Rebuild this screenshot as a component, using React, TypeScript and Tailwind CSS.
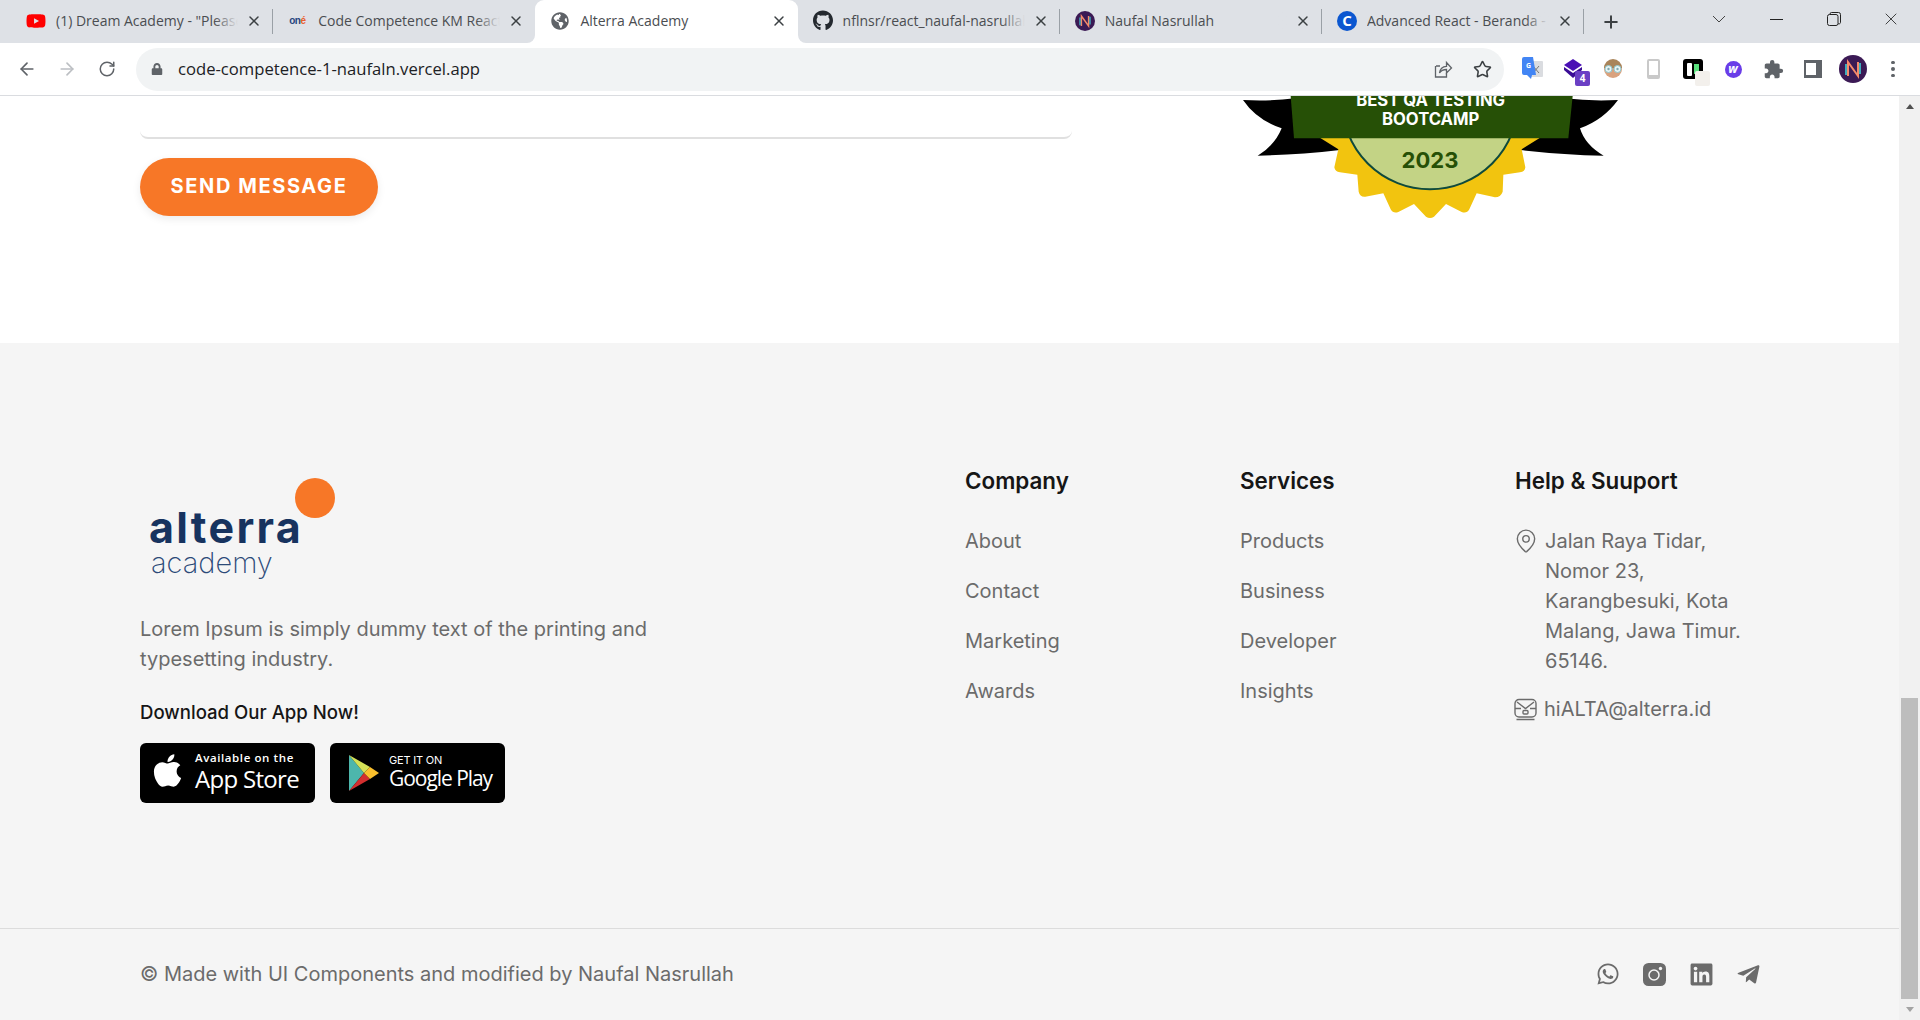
import React from "react";
import { ArrowLeft, ArrowRight, MapPin, Plus, RotateCw, Star, X } from "lucide-react";
import {
  FaApple,
  FaGithub,
  FaGlobeAmericas,
  FaLinkedin,
  FaLock,
  FaTelegramPlane,
  FaWhatsapp,
  FaYoutube,
} from "react-icons/fa";
import { MdExtension } from "react-icons/md";

const NAvatar = ({ size }: { size: number }) => (
  <svg width={size} height={size} viewBox="0 0 28 28">
    <circle cx="14" cy="14" r="14" fill="#3b1a55" />
    <path d="M9 21V7l10 14V7" fill="none" stroke="#f58a6a" strokeWidth="2" />
    <path d="M7 20V9M21 8v11" fill="none" stroke="#3fd0d8" strokeWidth="1.6" />
  </svg>
);

const OneIcon = () => (
  <span className="w-[18px] text-[10px] leading-none font-bold tracking-tighter text-[#27477f] font-['Liberation_Sans',sans-serif]">
    on<span className="text-[#e8602c]">é</span>
  </span>
);

const tabs = [
  { title: '(1) Dream Academy - "Please Stop', icon: <FaYoutube size={22} color="#f00" />, sep: true },
  { title: "Code Competence KM React", icon: <OneIcon />, sep: false },
  { title: "Alterra Academy", icon: <FaGlobeAmericas size={18} color="#5f6368" />, active: true, sep: false },
  { title: "nflnsr/react_naufal-nasrullah", icon: <FaGithub size={21} color="#24292f" />, sep: true },
  { title: "Naufal Nasrullah", icon: <NAvatar size={20} />, sep: true },
  {
    title: "Advanced React - Beranda - Dicoding",
    icon: (
      <span className="w-5 h-5 rounded-full bg-[#0b57d0] text-white grid place-items-center text-[15px] font-bold leading-none">
        C
      </span>
    ),
    sep: true,
  },
];

const Tab = ({ title, icon, active, sep }: { title: string; icon: React.ReactNode; active?: boolean; sep: boolean }) => (
  <div className={`relative w-[262.2px] h-[43px] shrink-0 flex items-center pl-[15px] pr-[11px] pb-[2px] ${active ? "bg-white rounded-t-[9px]" : ""}`}>
    {active && (
      <>
        <span className="absolute bottom-0 -left-2 w-2 h-2 bg-white">
          <span className="block w-2 h-2 bg-[#dee1e6] rounded-br-lg" />
        </span>
        <span className="absolute bottom-0 -right-2 w-2 h-2 bg-white">
          <span className="block w-2 h-2 bg-[#dee1e6] rounded-bl-lg" />
        </span>
      </>
    )}
    <span className="w-[20px] shrink-0 flex justify-center">{icon}</span>
    <div className="relative flex-1 ml-[10px] overflow-hidden whitespace-nowrap text-[14px] text-[#4a4d51]">
      {title}
      <span className={`absolute right-0 top-0 bottom-0 w-6 bg-gradient-to-r from-transparent ${active ? "to-white" : "to-[#dee1e6]"}`} />
    </div>
    <X size={16} strokeWidth={2.2} className="ml-[8px] shrink-0 text-[#3c4043]" />
    {sep && <span className="absolute right-0 top-[9px] h-[25px] w-px bg-[#9aa0a6]" />}
  </div>
);

const TabStrip = () => (
  <div className="h-[43px] shrink-0 bg-[#dee1e6] flex pl-[11px] font-['Open_Sans',sans-serif]">
    {tabs.map((t) => (
      <Tab key={t.title} {...t} />
    ))}
    <div className="w-[54px] grid place-items-center">
      <Plus size={20} strokeWidth={2.4} className="text-[#3c4043]" />
    </div>
    <div className="ml-auto flex text-[#333] pb-[5px]">
      <div className="w-[57.5px] grid place-items-center">
        <svg width="14" height="8" viewBox="0 0 14 8" fill="none" stroke="#444" strokeWidth="1">
          <path d="M1 1l6 6 6-6" />
        </svg>
      </div>
      <div className="w-[57.5px] grid place-items-center">
        <span className="w-[13px] h-px bg-[#222]" />
      </div>
      <div className="w-[57.5px] grid place-items-center">
        <svg width="14" height="14" viewBox="0 0 14 14" fill="none" stroke="#222" strokeWidth="1">
          <rect x="0.5" y="2.5" width="10.5" height="11" rx="2" />
          <path d="M3 2.5V2a1.5 1.5 0 0 1 1.5-1.5h7A2 2 0 0 1 13.5 2.500v8a1.500 1.500 0 0 1-2.500 1" />
        </svg>
      </div>
      <div className="w-[57.5px] grid place-items-center">
        <X size={20} strokeWidth={1} className="text-[#222]" />
      </div>
    </div>
  </div>
);

const ExtCell = ({ children }: { children: React.ReactNode }) => (
  <div className="relative w-10 h-10 shrink-0 grid place-items-center">{children}</div>
);

const Toolbar = () => (
  <div className="h-[53px] shrink-0 bg-white border-b border-[#dadce0] flex items-center pl-[7px] font-['Open_Sans',sans-serif]">
    <ExtCell>
      <ArrowLeft size={20} className="text-[#5f6368]" />
    </ExtCell>
    <ExtCell>
      <ArrowRight size={20} className="text-[#bcbfc3]" />
    </ExtCell>
    <ExtCell>
      <RotateCw size={18} className="text-[#5f6368]" />
    </ExtCell>
    <div className="ml-[9px] w-[1368px] h-[43px] rounded-full bg-[#f1f3f4] flex items-center pl-[15px] pr-[12px]">
      <FaLock size={12} className="text-[#5f6368]" />
      <span className="ml-[15px] text-[16.650px] text-[#202124]">code-competence-1-naufaln.vercel.app</span>
      <div className="ml-auto flex items-center gap-[20px] text-[#5f6368]">
        <svg width="20" height="20" viewBox="0 0 20 20" fill="none" stroke="#5f6368" strokeWidth="1.300">
          <path d="M3 7h4M2.500 7v11h11v-4" />
          <path d="M6.500 14c.5-4 3-6.500 7-6.700V3.500l5 5.500-5 5v-3.500c-3 0-5.500 1-7 3.500z" />
        </svg>
        <Star size={19} strokeWidth={2} className="text-[#3c4043]" />
      </div>
    </div>
    <div className="ml-[9px] flex">
      <ExtCell>
        <svg width="22" height="24" viewBox="0 0 22 24">
          <rect x="8" y="4" width="13" height="16" rx="1" fill="#dadce0" />
          <path d="M11 9l6 7M17 9l-6 7" stroke="#777" strokeWidth="1" />
          <path d="M0 2a2 2 0 0 1 2-2h9l3 18h-4l-1 4-4-4H2a2 2 0 0 1-2-2z" fill="#4285f4" />
          <text x="6.500" y="11" textAnchor="middle" fontSize="7" fontWeight="700" fill="#fff">G</text>
        </svg>
      </ExtCell>
      <ExtCell>
        <svg width="20" height="20" viewBox="0 0 20 20" className="-mt-px -ml-px">
          <path d="M10 0l9 6-9 6-9-6z" fill="#4a0fb5" />
          <path d="M1 8l9 6 9-6v3l-9 8-9-8z" fill="#3a0c96" />
        </svg>
        <span className="absolute right-[3px] bottom-[3px] w-[15px] h-[15px] rounded-[2px] bg-[#6a3fc4] text-white text-[10px] font-bold leading-[15px] text-center">
          4
        </span>
      </ExtCell>
      <ExtCell>
        <svg width="20" height="20" viewBox="0 0 20 20">
          <circle cx="10" cy="10" r="9" fill="#d9a27e" />
          <path d="M1 9a9 9 0 0 1 18 0z" fill="#a9845a" />
          <circle cx="5.500" cy="10" r="3.500" fill="#e8f4f4" stroke="#8fc7cf" />
          <circle cx="14.500" cy="10" r="3.500" fill="#e8f4f4" stroke="#8fc7cf" />
          <circle cx="5.500" cy="10" r="1.200" fill="#7fa9b2" />
          <circle cx="14.500" cy="10" r="1.200" fill="#7fa9b2" />
        </svg>
      </ExtCell>
      <ExtCell>
        <span className="w-[13px] h-[20px] rounded-[2px] border-2 border-[#c9c9c9] border-b-4" />
      </ExtCell>
      <ExtCell>
        <span className="w-5 h-5 rounded-[3px] bg-black flex items-center justify-center gap-[2px] -ml-px">
          <span className="w-[5px] h-[13px] bg-white rounded-[1px]" />
          <span className="w-[5px] h-[10px] bg-[#59e07c]" />
        </span>
        <span className="absolute right-[3px] bottom-[3px] w-[15px] h-[15px] rounded-[2px] bg-[#f3f0ec]" />
      </ExtCell>
      <ExtCell>
        <span className="w-[17px] h-[17px] rounded-full bg-[#6a3de8] text-white text-[12px] italic font-bold leading-[16px] text-center">
          w
        </span>
      </ExtCell>
      <ExtCell>
        <MdExtension size={21} className="text-[#5f6368]" />
      </ExtCell>
      <ExtCell>
        <span className="w-[18px] h-[18px] bg-[#5f6368] pl-[2px] py-[3px] pr-[6px] block">
          <span className="block h-full bg-white" />
        </span>
      </ExtCell>
      <ExtCell>
        <NAvatar size={28} />
      </ExtCell>
      <ExtCell>
        <span className="flex flex-col gap-[3px]">
          <span className="w-[3.500px] h-[3.500px] rounded-full bg-[#5f6368]" />
          <span className="w-[3.500px] h-[3.500px] rounded-full bg-[#5f6368]" />
          <span className="w-[3.500px] h-[3.500px] rounded-full bg-[#5f6368]" />
        </span>
      </ExtCell>
    </div>
  </div>
);

const QaBadge = () => (
  <svg width="420" height="134" viewBox="0 18 1260 402" className="font-['Inter',sans-serif]">
    <path d="M69 30 Q150 34 225 25 L360 180 Q230 195 113 197 Q165 165 185 115 Q110 90 69 30z" fill="#000" />
    <path d="M1194 30 Q1110 34 1035 25 L900 180 Q1030 195 1151 197 Q1095 165 1080 115 Q1150 90 1194 30z" fill="#000" />
    <path
      d="M295 140 L355 178 L343 232 Q345 245 360 247 L412 254 L416 305 Q420 322 436 320 L490 310 L512 358 Q520 372 535 366 L582 342 L618 380 Q630 388 642 380 L678 342 L725 366 Q740 372 748 358 L770 310 L825 322 Q842 322 848 305 L850 254 L900 247 Q915 245 916 232 L905 178 L965 140z"
      fill="#f2c40f"
    />
    <circle cx="630" cy="34" r="264" fill="#c3d385" stroke="#0f4a3c" strokeWidth="6" />
    <path d="M212 18 H1058 L1045 145 H222z" fill="#265006" />
    <text x="632" y="48" textAnchor="middle" fontSize="50" fontWeight="700" fill="#fff">BEST QA TESTING</text>
    <text x="632" y="105" textAnchor="middle" fontSize="50" fontWeight="700" fill="#fff">BOOTCAMP</text>
    <text x="630" y="235" textAnchor="middle" fontSize="66" fontWeight="700" fill="#265006">2023</text>
  </svg>
);

const ContactTail = () => (
  <section className="h-[247px] shrink-0 bg-white flex pl-[140px] overflow-hidden">
    <div className="w-[932px] shrink-0">
      <div className="h-[43px] border-b-2 border-[#e0e0e0] rounded-b-lg" />
      <button className="mt-[19px] w-[238px] h-[58px] rounded-full bg-[#f77727] text-white text-[20px] font-bold tracking-[1.6px] pb-[2px] shadow-[0_3px_8px_rgba(0,0,0,0.08)]">
        SEND MESSAGE
      </button>
    </div>
    <div className="ml-[148px]">
      <QaBadge />
    </div>
  </section>
);

const Logo = () => (
  <div className="relative ml-2 mt-3 w-[190px] h-[100px]">
    <span className="absolute left-[147px] top-0 w-10 h-10 rounded-full bg-[#f77727]" />
    <div className="pt-[26px] pl-[1px] text-[43px] leading-[46px] font-bold text-[#17335f] tracking-[2.3px]">alterra</div>
    <div className="-mt-[2px] pl-[3px] text-[29px] leading-[30px] font-extralight text-[#2c4a78]">academy</div>
  </div>
);

const StoreBadges = () => (
  <div className="mt-4 flex gap-[15px] text-white">
    <div className="w-[175px] h-[60px] rounded-md bg-black flex items-center pl-[9px]">
      <FaApple size={37} className="-mt-[6px]" />
      <div className="ml-[9px] -mt-[2px] font-['Open_Sans',sans-serif] whitespace-nowrap">
        <div className="text-[11.500px] leading-[14px] tracking-[0.6px] font-semibold">Available on the</div>
        <div className="text-[24px] leading-[28px] font-medium tracking-[-0.7px]">App Store</div>
      </div>
    </div>
    <div className="w-[175px] h-[60px] rounded-md bg-black flex items-center pl-[18px]">
      <svg width="31" height="36" viewBox="0 0 31 36">
        <path d="M1 0L16 18 1 36z" fill="#4db6ac" />
        <path d="M1 0L22 12 16 18z" fill="#d4e157" />
        <path d="M1 36L22 24 16 18z" fill="#d32f2f" />
        <path d="M22 12L31 18 22 24 16 18z" fill="#fbc02d" />
      </svg>
      <div className="ml-[10px] -mt-[2px] whitespace-nowrap">
        <div className="text-[11px] leading-[12px] font-normal tracking-[-0.2px]">GET IT ON</div>
        <div className="text-[21px] leading-[25px] font-normal tracking-[-1.05px] font-['Open_Sans',sans-serif]">Google Play</div>
      </div>
    </div>
  </div>
);

const LinkColumn = ({ title, links }: { title: string; links: string[] }) => (
  <div className="w-[275px] shrink-0">
    <h3 className="text-[22.400px] leading-[30px] font-semibold text-[#161616]">{title}</h3>
    <ul className="mt-[30px] flex flex-col gap-5">
      {links.map((l) => (
        <li key={l} className="text-[20px] leading-[30px] text-[#6b6b6b]">
          {l}
        </li>
      ))}
    </ul>
  </div>
);

const MailIcon = () => (
  <svg width="23" height="23" viewBox="0 0 23 23" fill="none" stroke="#6b6b6b" strokeWidth="1.400" className="shrink-0">
    <rect x="1" y="1.500" width="21" height="17.500" rx="4" />
    <path d="M3 4l8.500 6.500L20 4M1 10.500h6M16 10.500h6M2.500 21.500h18" />
    <rect x="9" y="12.500" width="5" height="3.500" rx="1" />
  </svg>
);

const InstagramIcon = () => (
  <svg width="23" height="23" viewBox="0 0 23 23">
    <rect width="23" height="23" rx="5.500" fill="#6b6b6b" />
    <circle cx="11" cy="12" r="5" fill="none" stroke="#f5f5f5" strokeWidth="1.500" />
    <circle cx="17.500" cy="5.500" r="1.700" fill="#f5f5f5" />
  </svg>
);

const socials = [
  <FaWhatsapp key="wa" size={24} />,
  <InstagramIcon key="ig" />,
  <FaLinkedin key="in" size={25} />,
  <FaTelegramPlane key="tg" size={25} />,
];

const Footer = () => (
  <footer className="flex-1 bg-[#f5f5f5] flex flex-col font-['Inter',sans-serif]">
    <div className="h-[585px] shrink-0 pt-[123px] pl-[140px] flex">
      <div className="w-[825px] shrink-0">
        <Logo />
        <p className="mt-9 w-[560px] text-[20px] leading-[30px] text-[#6b6b6b]">
          Lorem Ipsum is simply dummy text of the printing and typesetting industry.
        </p>
        <p className="mt-[23px] text-[18.600px] leading-[30px] font-medium text-[#161616]">Download Our App Now!</p>
        <StoreBadges />
      </div>
      <LinkColumn title="Company" links={["About", "Contact", "Marketing", "Awards"]} />
      <LinkColumn title="Services" links={["Products", "Business", "Developer", "Insights"]} />
      <div className="w-[260px] shrink-0">
        <h3 className="text-[22.400px] leading-[30px] font-semibold text-[#161616]">Help &amp; Suuport</h3>
        <div className="mt-[30px] flex gap-[6px] -ml-[2px] text-[20px] leading-[30px] text-[#6b6b6b]">
          <MapPin size={26} strokeWidth={1.300} className="shrink-0 mt-[2px]" />
          <p className="w-[215px]">Jalan Raya Tidar, Nomor 23, Karangbesuki, Kota Malang, Jawa Timur. 65146.</p>
        </div>
        <div className="mt-[18px] flex items-center gap-[7px] -ml-[1px] text-[20px] leading-[30px] text-[#6b6b6b]">
          <MailIcon />
          <span>hiALTA@alterra.id</span>
        </div>
      </div>
    </div>
    <div className="flex-1 border-t border-[#dcdcdc] pl-[140px] pr-[127px] pb-px flex items-center justify-between text-[#6b6b6b]">
      <span className="text-[20px]">© Made with UI Components and modified by Naufal Nasrullah</span>
      <div className="flex">
        {socials.map((icon) => (
          <span key={icon.key} className="w-[47px] grid place-items-center">
            {icon}
          </span>
        ))}
      </div>
    </div>
  </footer>
);

const Scrollbar = () => (
  <div className="w-[21px] shrink-0 bg-[#f1f1f1] flex flex-col items-start pl-[2px]">
    <div className="w-[17px] h-[21px] grid place-items-center">
      <span className="w-0 h-0 border-x-[4px] border-x-transparent border-b-[5px] border-b-[#505050]" />
    </div>
    <div className="flex-1" />
    <div className="w-[17px] h-[301px] bg-[#bdbdbd]" />
    <div className="w-[17px] h-[21px] grid place-items-center">
      <span className="w-0 h-0 border-x-[4px] border-x-transparent border-t-[5px] border-t-[#a3a3a3]" />
    </div>
  </div>
);

export default function App() {
  return (
    <div className="h-screen w-full flex flex-col overflow-hidden bg-white font-['Inter',sans-serif]">
      <TabStrip />
      <Toolbar />
      <div className="flex-1 flex min-h-0">
        <main className="flex-1 min-w-0 flex flex-col">
          <ContactTail />
          <Footer />
        </main>
        <Scrollbar />
      </div>
    </div>
  );
}
